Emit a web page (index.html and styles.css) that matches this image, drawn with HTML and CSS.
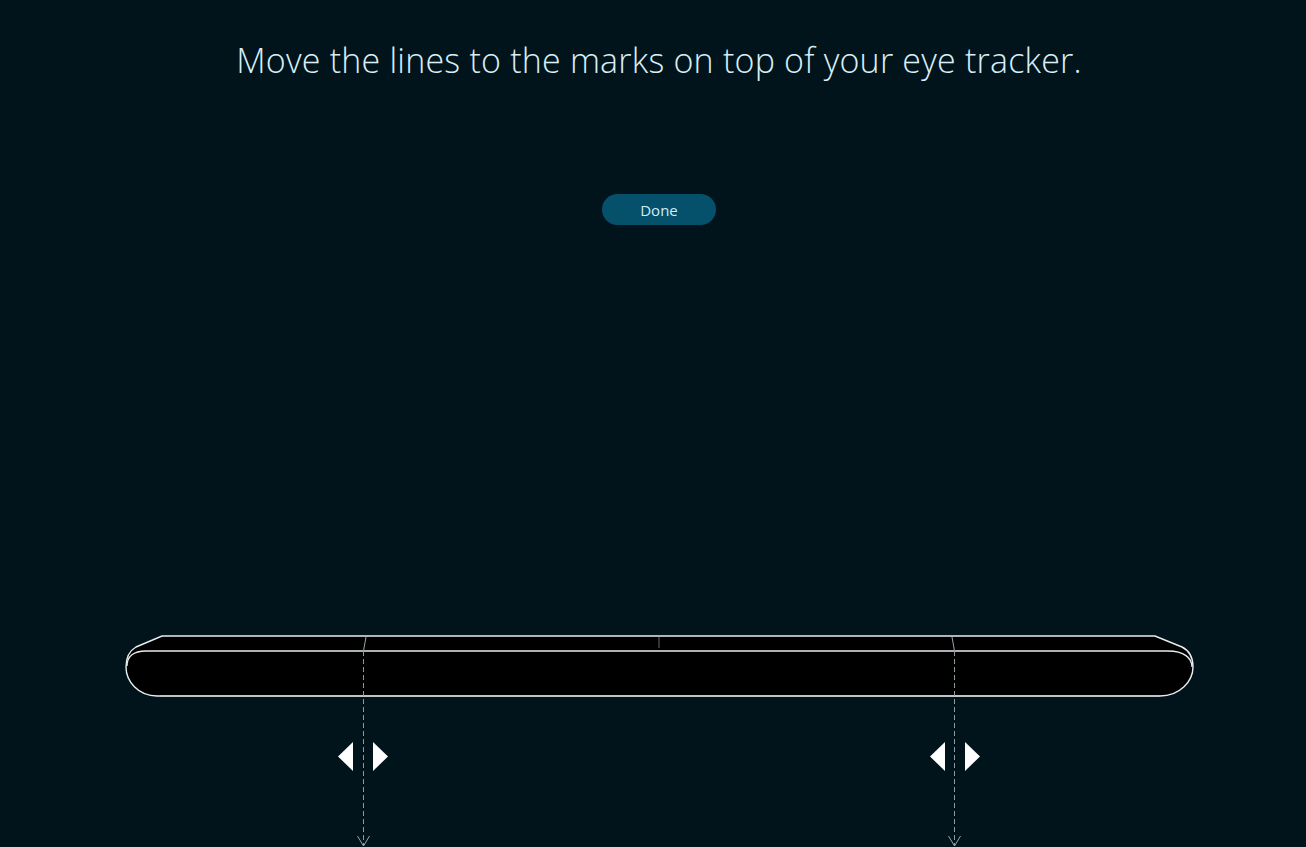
FILE: index.html
```html
<!DOCTYPE html>
<html>
<head>
<meta charset="utf-8">
<link rel="stylesheet" href="styles.css">
</head>
<body>
<main class="screen">
  <h1 class="title">Move the lines to the marks on top of your eye tracker.</h1>
  <button class="done">Done</button>
  <div class="stage">
    <svg class="tracker" width="1306" height="227" viewBox="0 620 1306 227">
      <path d="M162,636 L1155,636 L1182,647 C1190,651 1193,659 1193,667 C1193,681 1180,696 1160,696 L157,696 C138,696 126,681 126,667 C126,659 129,651 136,647 Z" fill="#000" stroke="#e8eef0" stroke-width="1.4"/>
      <path d="M127,666 C127,657 133,651 146,651 L1168,651 C1184,651 1192,658 1192,667" fill="none" stroke="#e6ecee" stroke-width="1.4"/>
      <path d="M160,696 L1160,696" stroke="#c4c8ca" stroke-width="1.4"/>
      <line x1="659" y1="637" x2="659" y2="648" stroke="#666" stroke-width="1"/>
      <path d="M366,637 L363.5,651" stroke="#9aa6aa" stroke-width="1" fill="none"/>
      <line x1="363.5" y1="651" x2="363.5" y2="846" stroke="#8c9ba1" stroke-width="1" stroke-dasharray="5 3"/>
      <path d="M952,637 L954.5,651" stroke="#9aa6aa" stroke-width="1" fill="none"/>
      <line x1="954.5" y1="651" x2="954.5" y2="846" stroke="#8c9ba1" stroke-width="1" stroke-dasharray="5 3"/>
      <path d="M357.5,836 L363.5,846 L369.5,836" stroke="#9aa6aa" stroke-width="1" fill="none"/>
      <path d="M948.5,836 L954.5,846 L960.5,836" stroke="#9aa6aa" stroke-width="1" fill="none"/>
      <polygon points="353,742 338,756.5 353,771" fill="#fff"/>
      <polygon points="373,742 388,756.5 373,771" fill="#fff"/>
      <polygon points="945,742 930,756.5 945,771" fill="#fff"/>
      <polygon points="965,742 980,756.5 965,771" fill="#fff"/>
    </svg>
  </div>
</main>
</body>
</html>
```

FILE: styles.css
```css
html, body {
  margin: 0;
  padding: 0;
  background: #02141b;
}
.screen {
  box-sizing: border-box;
  width: 1306px;
  height: 847px;
  overflow: hidden;
  display: flex;
  flex-direction: column;
  align-items: center;
}
.title {
  margin: 36px 0 0 12px;
  font-family: "Open Sans", "Liberation Sans", sans-serif;
  font-weight: 300;
  font-size: 34px;
  line-height: 48px;
  color: #d9eef6;
  letter-spacing: 0.2px;
  text-align: center;
}
.done {
  margin: 110px 0 0 12px;
  width: 114px;
  height: 31px;
  border: none;
  border-radius: 16px;
  background: #05506a;
  color: #d2ecf5;
  font-family: "Open Sans", "Liberation Sans", sans-serif;
  font-size: 15px;
  font-weight: 400;
  padding: 0;
}
.stage {
  margin-top: auto;
  width: 1306px;
  height: 227px;
}
.tracker {
  display: block;
}
```
